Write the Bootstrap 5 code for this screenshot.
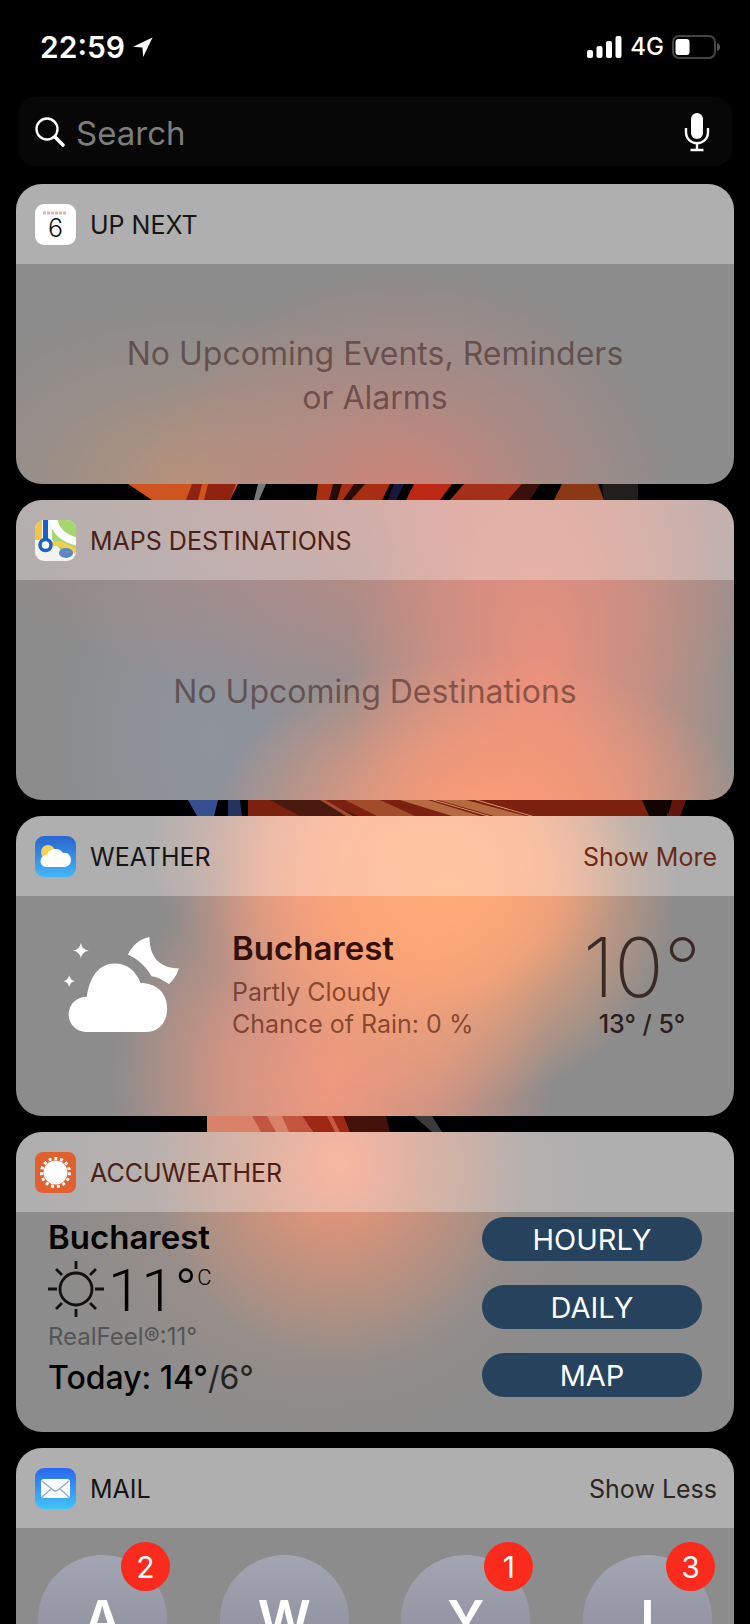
<!DOCTYPE html>
<html lang="en">
<head>
<meta charset="utf-8">
<meta name="viewport" content="width=device-width, initial-scale=1">
<title>Today</title>
<link href="https://cdn.jsdelivr.net/npm/bootstrap@5.3.0/dist/css/bootstrap.min.css" rel="stylesheet">
<style>
body{background:#000;font-family:Inter,"Liberation Sans",sans-serif;color:#000}
.screen{height:100vh;overflow:hidden}
.status{height:97px;padding:2px 30px 6px 40px;color:#fff}
.clock{font-size:30px;font-weight:600;line-height:36px}
.net{font-size:24px;font-weight:500;line-height:36px}
.searchbar{height:69px;margin:0 18px 18px;padding:0 21px 0 16px;border-radius:18px;background:#070707}
.searchbar .form-control{background:none;border:0;color:#fff;font-size:33px;line-height:40px;padding:2px 0 0 2px;box-shadow:none}
.searchbar .form-control::placeholder{color:#7c7c7c;opacity:1}
.widget{height:300px;margin:0 16px;border-radius:26px;background-color:#8c8c8c;overflow:hidden;flex:none}
.w-head{height:80px;padding:0 17px 0 19px;background:rgba(255,255,255,.31);gap:14px;flex:none}
.w-head h2,.w-head a{font-size:25px;line-height:32px;font-weight:400;margin:0;padding-top:2px}
.w-head h2{color:#161616}
.w-head a{color:#2c2625;text-decoration:none}
.w-head svg{flex:none}
.w-head .brown{color:#4c1f17}
.w-head .hot{color:#6b2a18}
.empty{font-size:32px;line-height:44px;color:rgba(50,20,20,.5);padding-top:3px}
.strip{height:16px;width:100%;display:block;flex:none}
.city{font-size:33px;line-height:40px;font-weight:600}
.detail{font-size:25px;line-height:32px}
.glow-a{background-image:radial-gradient(270px 240px at 54% 108%,rgba(228,128,112,.8),rgba(214,136,122,.4) 50%,transparent),radial-gradient(260px 180px at 23% 100%,rgba(205,150,112,.6),rgba(190,150,125,.25) 55%,transparent)}
.glow-b{background-image:radial-gradient(270px 170px at 65% 108%,#ff9c74,rgba(255,156,120,.6) 50%,transparent),radial-gradient(190px 340px at 73% 60%,rgba(240,144,124,.9),rgba(232,144,124,.5) 55%,transparent),radial-gradient(480px 220px at 58% 0,rgba(225,135,125,.6),transparent),radial-gradient(170px 260px at 27% 80%,rgba(145,153,168,.6),transparent),linear-gradient(90deg,transparent 30%,rgba(178,148,140,.55) 65%,rgba(160,148,142,.55))}
.glow-c{background-image:radial-gradient(230px 220px at 60% 24%,#ffac78,rgba(255,166,118,.8) 45%,transparent),radial-gradient(220px 240px at 44% 88%,rgba(246,154,126,.95),rgba(242,152,126,.65) 50%,transparent),radial-gradient(240px 180px at 52% 10%,#ffa484,rgba(250,160,130,.7) 50%,transparent)}
.glow-d{background-image:radial-gradient(190px 200px at 45% 10%,rgba(255,150,118,.9),rgba(228,148,116,.55) 50%,transparent),radial-gradient(280px 260px at 42% 16%,rgba(190,150,130,.55),transparent)}
.dusk{color:#351008}
.tint{color:rgba(80,20,0,.65)}
.wx{padding:0 33px 0 48px}
.now{font-size:82px;font-weight:200;line-height:80px;color:#3a2a25}
.range{font-size:25px;line-height:32px;color:#2a1f1c}
.acc{padding:5px 32px 0}
.acc-temp{font-family:Roboto,sans-serif;font-size:60px;font-weight:300;line-height:60px}
.acc-temp sup{font-size:22px;top:-26px;line-height:0}
.feel{font-size:24px;line-height:32px;color:#555}
.today{font-size:32px;line-height:50px}
.btn-acc{width:220px;height:44px;border-radius:22px;background:#26425c;color:#fff;font-size:29px;line-height:32px;padding:2px 0 0;border:0}
.btn-acc:hover{background:#31506d;color:#fff}
.people{padding:27px 22px 0}
.face{width:129px;height:129px;border-radius:50%;background:linear-gradient(#a4a5b2,#858995);color:#fff;font-size:52px;font-weight:600;text-decoration:none}
.count{width:49px;height:49px;top:-13px;right:-3px;border-radius:50%;background:#fa2a1d;font-size:30px;font-weight:400;line-height:50px;padding:0}
</style>
</head>
<body>
<div class="screen d-flex flex-column">
<header class="status d-flex align-items-center justify-content-between flex-shrink-0">
  <div class="d-flex align-items-center gap-2">
    <span class="clock">22:59</span>
    <svg width="20" height="20" viewBox="0 0 20 20" aria-hidden="true"><path d="M19.500 .5 0 9.800l9.400.8.800 9.400z" fill="#fff"/></svg>
  </div>
  <div class="d-flex align-items-center gap-2">
    <svg width="35" height="22" viewBox="0 0 35 22" fill="#fff" aria-hidden="true"><rect y="14" width="6" height="8" rx="2"/><rect x="9.500" y="10" width="6" height="12" rx="2"/><rect x="19" y="5" width="6" height="17" rx="2"/><rect x="28.500" width="6" height="22" rx="2"/></svg>
    <span class="net">4G</span>
    <svg width="48" height="24" viewBox="0 0 48 24" aria-hidden="true"><rect x="1" y="1" width="42" height="22" rx="6" fill="none" stroke="#444" stroke-width="2"/><rect x="3.500" y="4" width="14" height="16" rx="3" fill="#fff"/><path d="M45 8q3 1 3 4t-3 4z" fill="#555"/></svg>
  </div>
</header>
<form class="searchbar d-flex align-items-center flex-shrink-0 gap-2" role="search">
  <svg class="flex-shrink-0" width="32" height="32" viewBox="0 0 32 32" fill="none" stroke="#fff" aria-hidden="true"><circle cx="13" cy="13" r="10.500" stroke-width="2.400"/><path d="M21 21l8 8" stroke-width="3.600" stroke-linecap="round"/></svg>
  <input class="form-control" type="text" placeholder="Search" aria-label="Search">
  <svg class="flex-shrink-0" width="28" height="40" viewBox="0 0 28 40" fill="none" stroke="#fff" aria-hidden="true"><rect x="8" y="1" width="12" height="26" rx="6" fill="#fff" stroke="none"/><path d="M3 16v4c0 15 22 15 22 0v-4M14 31v7M7.500 38h13" stroke-width="2.400"/></svg>
</form>

<section class="widget glow-a d-flex flex-column">
  <div class="w-head d-flex align-items-center">
    <svg width="41" height="41" viewBox="0 0 41 41" aria-hidden="true"><rect width="41" height="41" rx="9" fill="#fff"/><path d="M8 9h24" stroke="#e8b0ad" stroke-width="3" stroke-dasharray="3 1"/><text x="20.500" y="33" font-size="25" font-weight="300" text-anchor="middle" fill="#111">6</text></svg>
    <h2>UP NEXT</h2>
  </div>
  <div class="empty flex-grow-1 d-flex align-items-center justify-content-center text-center px-5"><div>No Upcoming Events, Reminders<br>or Alarms</div></div>
</section>

<svg class="strip" viewBox="0 0 750 16" preserveAspectRatio="none" aria-hidden="true">
  <path d="M128 0h110l-8 16h-78z" fill="#cf5420"/><path d="M192 0h10l-4 16h-12zM208 0h28l-6 16h-26z" fill="#8f230f"/>
  <path d="M258 0h8l-7 16h-5z" fill="#777"/><path d="M318 0h72l-8 16h-66z" fill="#a92d13"/><path d="M333 0h9l-5 16h-8zM354 0h11l-14 16h-8z" fill="#260b06"/>
  <path d="M394 0h10l-8 16h-8z" fill="#17193a"/><path d="M414 0h38l-12 16h-34z" fill="#bd2815"/><path d="M464 0h58l-14 16h-58z" fill="#a5301a"/><path d="M522 0h18l-10 16h-22z" fill="#3b100a"/><path d="M562 0h36l6 16h-50z" fill="#8a3914"/><path d="M602 0h36v16h-34z" fill="#211f1e"/>
</svg>

<section class="widget glow-b d-flex flex-column">
  <div class="w-head d-flex align-items-center">
    <svg width="41" height="41" viewBox="0 0 41 41" aria-hidden="true"><defs><clipPath id="mapclip"><rect width="41" height="41" rx="9"/></clipPath></defs><g clip-path="url(#mapclip)"><path fill="#f4f3ef" d="M0 0h41v41H0z"/><path d="M0 0h7v20H0z" fill="#f3c64b"/><path d="M17 0h24v32H27L17 19z" fill="#a6d66e"/><path d="M18-2c2 14 11 21 26 24" fill="none" stroke="#fff" stroke-width="8"/><path d="M15 25c7-3 12-2 26 7" fill="none" stroke="#f2cf4b" stroke-width="5"/><path d="M10.500 0v24" stroke="#1b62c5" stroke-width="5"/><circle cx="10.500" cy="25" r="5.500" fill="#fff" stroke="#1b62c5" stroke-width="3.500"/><ellipse cx="31" cy="33" rx="7" ry="5" fill="#5886c9"/><path d="M27 32h8" stroke="#8b7fb0" stroke-width="1.500"/></g></svg>
    <h2 class="brown">MAPS DESTINATIONS</h2>
  </div>
  <div class="empty flex-grow-1 d-flex align-items-center justify-content-center text-center">No Upcoming Destinations</div>
</section>

<svg class="strip" viewBox="0 0 750 16" preserveAspectRatio="none" aria-hidden="true">
  <path d="M188 0h30l-4 16h-17z" fill="#354f91"/><path d="M228 0h12l2 16h-14z" fill="#26335f"/><path d="M248 0h400l25 16H248z" fill="#7c210f"/><path d="M270 0h50l38 16h-58z" fill="#4a1a10"/><path d="M320 0h5l28 16h-7zM345 0h35l35 16h-38z" fill="#a34c2c"/><path d="M400 0h28l52 16h-28zM438 0h28l60 16h-32z" fill="#b66a42"/><path d="M432 0h3l55 16h-3zM475 0h3l55 16h-3z" fill="#e0a078"/><path d="M642 0h28l-3 16h-18z" fill="#120403"/><path d="M672 0h14l-6 16h-12z" fill="#64150b"/>
</svg>

<section class="widget glow-c d-flex flex-column">
  <div class="w-head d-flex align-items-center">
    <svg width="41" height="41" viewBox="0 0 41 41" aria-hidden="true"><defs><linearGradient id="sky" x2="0" y2="1"><stop stop-color="#2965cf"/><stop offset="1" stop-color="#43b6f7"/></linearGradient></defs><rect width="41" height="41" rx="9" fill="url(#sky)"/><circle cx="13" cy="16" r="7" fill="#f8d15a"/><path d="M11 31a6 6 0 0 1 1-12 9 9 0 0 1 16-2c5-1 8 3 8 7s-3 7-7 7z" fill="#fff"/></svg>
    <h2>WEATHER</h2>
    <a class="ms-auto hot" href="#">Show More</a>
  </div>
  <div class="wx d-flex pt-4">
    <svg class="mt-3 flex-shrink-0" width="120" height="98" viewBox="0 0 120 100" fill="#fff" aria-label="Partly cloudy night"><path d="M21 98a18 18 0 0 1 1-36C25 40 36 28 50 28c13 0 22 7 27 20 15 0 27 9 27 26 0 15-9 24-22 24z"/><path d="M64 19C68 10 76 3 86 1c0 19 9 32 30 32-2 7-5 11-10 16-7-4-10-7-18-8C83 32 76 25 64 19z"/><path d="M16 7q1 7 8 8-7 1-8 8-1-7-8-8 7-1 8-8zM4 40q1 5 6 6-5 1-6 6-1-5-6-6 5-1 6-6z"/></svg>
    <div class="ps-5 pt-2"><div class="city dusk">Bucharest</div><div class="detail tint pt-2">Partly Cloudy<br>Chance of Rain: 0 %</div></div>
    <div class="ms-auto text-center pt-2"><div class="now">10°</div><div class="range fw-medium">13° / 5°</div></div>
  </div>
</section>

<svg class="strip" viewBox="0 0 750 16" preserveAspectRatio="none" aria-hidden="true">
  <path d="M207 0h100v16H207z" fill="#d98269"/><path d="M252 0h15l9 16h-15zM282 0h20l12 16h-25z" fill="#c2553e"/><path d="M302 0h42l6 16h-36z" fill="#9d2815"/><path d="M327 0h5l8 16h-5z" fill="#c75a40"/><path d="M344 0h42l4 16h-40z" fill="#43120b"/><path d="M414 0h18l10 16h-10z" fill="#3c3a3a"/>
</svg>

<section class="widget glow-d d-flex flex-column">
  <div class="w-head d-flex align-items-center">
    <svg width="41" height="41" viewBox="0 0 41 41" aria-hidden="true"><rect width="41" height="41" rx="8" fill="#e0602f"/><circle cx="20.500" cy="20.500" r="14" fill="none" stroke="#fff" stroke-width="3" stroke-dasharray="2.900 2.960"/><circle cx="20.500" cy="20.500" r="12" fill="#fff"/></svg>
    <h2 class="brown">ACCUWEATHER</h2>
  </div>
  <div class="acc d-flex justify-content-between">
    <div>
      <div class="city">Bucharest</div>
      <div class="acc-temp d-flex align-items-center">
        <svg class="me-1" width="56" height="56" viewBox="0 0 56 56" fill="none" stroke="#111" stroke-width="2.800" aria-label="Sunny"><circle cx="28" cy="28" r="16"/><path d="M28 0v8M28 48v8M0 28h9M47 28h9M8 8l6 6M42 42l6 6M8 48l6-6M42 14l6-6"/></svg>
        <span class="pt-1">11°<sup>C</sup></span>
      </div>
      <div class="feel">RealFeel®:11°</div>
      <div class="today"><span class="fw-medium">Today: 14°</span><span class="opacity-75">/6°</span></div>
    </div>
    <div class="d-flex flex-column gap-4">
      <button class="btn btn-acc" type="button">HOURLY</button>
      <button class="btn btn-acc" type="button">DAILY</button>
      <button class="btn btn-acc" type="button">MAP</button>
    </div>
  </div>
</section>

<div class="strip"></div>

<section class="widget d-flex flex-column">
  <div class="w-head d-flex align-items-center">
    <svg width="41" height="41" viewBox="0 0 41 41" aria-hidden="true"><defs><linearGradient id="post" x2="0" y2="1"><stop stop-color="#2967ee"/><stop offset="1" stop-color="#43c3f8"/></linearGradient></defs><rect width="41" height="41" rx="9" fill="url(#post)"/><rect x="6" y="11" width="29" height="19" rx="3" fill="#fff"/><path d="M7 13l11 9q2.500 2 5 0l11-9M7 29l9-8M34 29l-9-8" fill="none" stroke="#8aa9d8" stroke-width="1.300"/></svg>
    <h2>MAIL</h2>
    <a class="ms-auto" href="#">Show Less</a>
  </div>
  <div class="people d-flex justify-content-between">
    <a class="face position-relative d-flex align-items-center justify-content-center" href="#">A<span class="count badge position-absolute">2</span></a>
    <a class="face position-relative d-flex align-items-center justify-content-center" href="#">W</a>
    <a class="face position-relative d-flex align-items-center justify-content-center" href="#">Y<span class="count badge position-absolute">1</span></a>
    <a class="face position-relative d-flex align-items-center justify-content-center" href="#">I<span class="count badge position-absolute">3</span></a>
  </div>
</section>
</div>
<script src="https://cdn.jsdelivr.net/npm/bootstrap@5.3.0/dist/js/bootstrap.bundle.min.js"></script>
</body>
</html>
